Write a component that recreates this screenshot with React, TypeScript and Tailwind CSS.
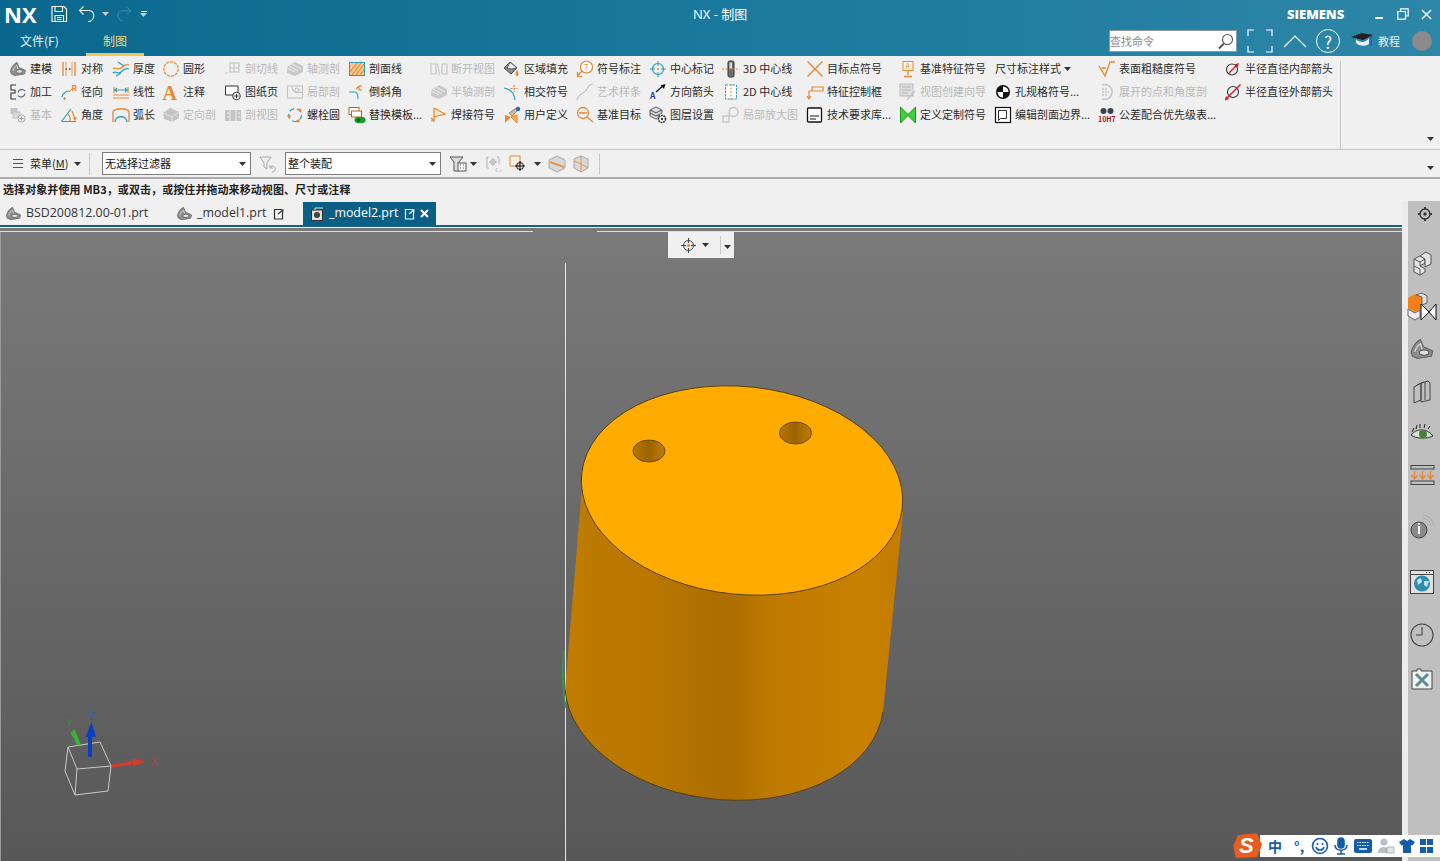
import type { ReactNode } from "react";

const O = "#e8872f";
const T = "#2a9fbd";
const D = "#333333";
const G = "#c4c4c4";

const glyphs: Record<string, ReactNode> = {
  part: (
    <>
      <path d="M1.5 11.5C2 8 5 3.5 8 2.5L10 7.5 16.5 10.5 15.5 14 6 15.5 2.5 14Z" fill="#8d8d8d" stroke="#666" strokeWidth=".8" />
      <path d="M4 11C5 8 6.500 6 8 5.500L9 9" fill="none" stroke="#d8d8d8" strokeWidth=".9" />
      <ellipse cx="10.5" cy="11.5" rx="3.2" ry="1.8" fill="#e0e0e0" stroke="#555" strokeWidth=".7" />
    </>
  ),
  jiagong: (
    <g fill="none" stroke={D} strokeWidth="1.1">
      <path d="M7 2H2V7H6V10H2V16H7" />
      <path d="M9 9.5A4 4 0 0 1 16 8M16 10.5A4 4 0 0 1 9 12.5" stroke="#555" />
    </g>
  ),
  jiben: (
    <>
      <rect x="1.5" y="2" width="7" height="6" fill={G} />
      <rect x="4" y="6" width="7" height="6" fill="#d8d8d8" stroke={G} />
      <circle cx="12.5" cy="12.5" r="3.6" fill="#eee" stroke="#aaa" />
      <path d="M12.5 10.5V14.5M10.5 12.5H14.5" stroke="#999" />
    </>
  ),
  duicheng: (
    <g fill="none" stroke={O} strokeWidth="1.3">
      <path d="M3 2V16M15 2V16" />
      <path d="M5.5 9H12.5" stroke={D} strokeDasharray="1.5 2" />
      <path d="M6 2V16" strokeWidth=".8" />
      <path d="M12 2V16" strokeWidth=".8" />
    </g>
  ),
  jingxiang: (
    <>
      <path d="M2 14A8 8 0 0 1 9 8" fill="none" stroke={T} strokeWidth="1.2" />
      <path d="M3 15.5H6M4.5 14V17M9 9L13 5" stroke={O} strokeWidth="1" />
      <text x="11.5" y="8" fontSize="8" fontWeight="700" fill={O}>R</text>
    </>
  ),
  jiaodu: (
    <>
      <path d="M1.5 15.5L11 3M1.5 15.5H16" fill="none" stroke={T} strokeWidth="1.2" />
      <path d="M8 8A8 8 0 0 1 10 15M12 5L15 13" fill="none" stroke={O} strokeWidth="1.2" />
      <path d="M13 12L17 11 15 15Z" fill={O} />
    </>
  ),
  houdu: (
    <g fill="none" strokeWidth="1.2">
      <path d="M1 9C4 6 6 11 9 8S14 4 17 5" stroke={O} />
      <path d="M1 13C4 10 6 15 9 12S14 8 17 9" stroke={T} />
      <path d="M6 2L12 6M4 16L9 13" stroke={T} />
    </g>
  ),
  xianxing: (
    <g fill="none" strokeWidth="1.2">
      <path d="M1 15H17M1 12H17" stroke={O} />
      <path d="M2 4V10M16 4V10" stroke={O} />
      <path d="M3 7H15M5 5L3 7 5 9M13 5L15 7 13 9" stroke={T} />
    </g>
  ),
  huchang: (
    <g fill="none" strokeWidth="1.3">
      <path d="M3 16C3 9 15 9 15 16" stroke={T} />
      <path d="M1 5C5 2 13 2 17 5M1 5V16M17 5V16" stroke={O} />
    </g>
  ),
  yuanxing: <circle cx="9" cy="9" r="7.2" fill="none" stroke={O} strokeWidth="1.2" strokeDasharray="3.2 .9" />,
  zhushi: <text x="0.5" y="16.500" fontFamily="Liberation Serif, serif" fontSize="20" fontWeight="700" fill={O}>A</text>,
  dingxiang: (
    <>
      <path d="M1 7L8 2 17 6V12L10 16 2 13Z" fill={G} />
      <path d="M1 7L10 11 17 6M10 11V16" fill="none" stroke="#e4e4e4" />
    </>
  ),
  qiexian: (
    <g fill="none" stroke={G} strokeWidth="1.1">
      <rect x="6" y="3" width="9" height="9" />
      <path d="M1 13H4M6 8H15M10 3V12" />
    </g>
  ),
  tuzhi: (
    <>
      <path d="M1.5 3H14V12H1.5Z" fill="#fff" stroke={D} strokeWidth="1" />
      <circle cx="12.5" cy="13" r="3.8" fill="#fff" stroke={D} />
      <path d="M12.5 10.8V15.2M10.3 13H14.7" stroke={D} />
    </>
  ),
  pouview: (
    <>
      <rect x="1" y="4" width="16" height="11" fill={G} />
      <path d="M6 4V15M12 4V15M3 7H5M3 11H5M14 7H16M14 11H16" stroke="#eee" />
    </>
  ),
  zhouce: (
    <>
      <path d="M1 7L9 2 17 6V12L9 16 1 13Z" fill="#c9c9c9" />
      <path d="M3 6L12 11M6 4L15 9M1 8L9 12" stroke="#eee" />
    </>
  ),
  jubu: (
    <g fill="none" stroke={G} strokeWidth="1.1">
      <rect x="1.5" y="3" width="15" height="12" />
      <path d="M6 3C6 9 11 11 16 9" />
      <circle cx="11" cy="7" r="2" />
    </g>
  ),
  luoshuan: (
    <>
      <circle cx="9" cy="9" r="6.5" fill="none" stroke={T} strokeWidth="1.2" strokeDasharray="5 3" />
      <circle cx="14" cy="4" r="1.6" fill={O} />
      <circle cx="3" cy="10" r="1.6" fill={O} />
      <circle cx="12" cy="15" r="1.6" fill={O} />
    </>
  ),
  poumian: (
    <>
      <rect x="1.5" y="2.5" width="15" height="13" fill="#f6c88e" stroke={T} />
      <path d="M2 12L9 3M4 15L13 3M8 15L16 4M12 15L16 10" stroke={O} strokeWidth="1.1" />
    </>
  ),
  daoxie: (
    <g fill="none" strokeWidth="1.2">
      <path d="M1 9H7C9 9 10 11 10 16" stroke={T} />
      <path d="M8 6L11 3M14 3H11V7H14" stroke={O} />
    </g>
  ),
  tihuan: (
    <>
      <rect x="1" y="1.5" width="10" height="7" fill="#fff" stroke="#b5651d" />
      <rect x="3.5" y="5" width="10" height="6" fill="#fff" stroke="#b5651d" />
      <rect x="6.5" y="11" width="11" height="6" rx="3" fill="#14a01e" />
      <circle cx="10.5" cy="14" r="1.8" fill="#063" />
    </>
  ),
  duankai: (
    <g fill="none" stroke={G} strokeWidth="1.1">
      <path d="M1 4H6C5 7 7 10 6 14H1ZM17 4H12C13 7 11 10 12 14H17Z" />
      <path d="M8 3C7 7 10 11 9 15" />
    </g>
  ),
  hanjie: (
    <g fill="none" stroke={O} strokeWidth="1.2">
      <path d="M4 2V15H1M4 2L15 8 4 11" fill="#fbe8d4" />
      <path d="M1 12L4 15" />
    </g>
  ),
  quyu: (
    <>
      <path d="M7 2L14 8 8 14 1 8Z" fill="#8f8f8f" stroke="#444" />
      <path d="M4 8L7 2 14 8 8 9Z" fill="#eee" stroke="#444" strokeWidth=".8" />
      <path d="M14 10C12 13 12 16 14 16S16 13 14 10Z" fill={O} />
    </>
  ),
  xiangjiao: (
    <g fill="none" strokeWidth="1.2">
      <path d="M1 5C7 6 11 9 12 17" stroke={T} />
      <path d="M11 2V9M7.5 5.500H14.500" stroke={O} strokeDasharray="2 1" />
    </g>
  ),
  yonghu: (
    <>
      <path d="M2 9L8 11 2 17Z" fill={O} />
      <path d="M8 11L14 9 14 17Z" fill="#f4b06a" stroke={O} />
      <path d="M6 7L13 2 15 4 9 10Z" fill="#d8b58e" stroke="#777" strokeWidth=".7" />
      <circle cx="15" cy="3" r="2.200" fill="#2b5fb8" />
    </>
  ),
  fuhao: (
    <>
      <circle cx="10.500" cy="7" r="6" fill="#fff" stroke={O} strokeWidth="1.2" />
      <text x="8" y="10" fontSize="8" fill={O}>7</text>
      <path d="M6 11L1.500 16M1.500 12V16.500H6" fill="none" stroke={O} strokeWidth="1.200" />
    </>
  ),
  yishu: <path d="M1 17C3 9 9 11 11 6S15 2 17 1" fill="none" stroke={G} strokeWidth="1.200" />,
  jizhun: (
    <g fill="none" stroke={O} strokeWidth="1.300">
      <circle cx="7" cy="7" r="5.500" />
      <path d="M3 7H11M11 11L17 16" />
    </g>
  ),
  zhongxin: (
    <>
      <circle cx="9" cy="9" r="5.500" fill="none" stroke={T} strokeWidth="1.200" />
      <path d="M9 1V6M9 12V17M1 9H6M12 9H17" stroke={T} />
      <circle cx="9" cy="9" r="1" fill={O} />
    </>
  ),
  fangxiang: (
    <>
      <text x="1" y="15.500" fontSize="8.500" fontWeight="700" fill="#1f3f9e">A</text>
      <path d="M7 9L15 2" stroke="#111" strokeWidth="1.200" />
      <path d="M16.500 1L11.500 2.500 15 6Z" fill="#111" />
    </>
  ),
  tuceng: (
    <>
      <g fill="#ddd" stroke="#555" strokeWidth=".9">
        <path d="M1 4L7 1 13 4 7 7Z" />
        <path d="M1 7L7 10 13 7V4L7 7 1 4Z" />
        <path d="M1 10L7 13 10 11.500V9L7 10 1 7Z" />
      </g>
      <circle cx="13" cy="13" r="3.500" fill="#fff" stroke="#333" strokeWidth="1.600" strokeDasharray="1.800 .7" />
      <circle cx="13" cy="13" r="1.200" fill="#333" />
    </>
  ),
  d3: (
    <>
      <rect x="6" y="1" width="6" height="16" rx="1.500" fill="#6d6d6d" stroke="#333" />
      <rect x="7.500" y="2.500" width="2.500" height="6" fill="#ddd" />
      <path d="M0 9H18" stroke={O} strokeDasharray="2 1.500" />
    </>
  ),
  d2: (
    <>
      <rect x="3.500" y="2" width="11" height="14" fill="#fff" stroke={T} strokeDasharray="2.500 1" />
      <path d="M9 1V17" stroke={O} strokeDasharray="2 1.500" />
    </>
  ),
  fangda: (
    <g fill="none" stroke={G} strokeWidth="1.300">
      <rect x="1" y="10" width="6" height="6" />
      <circle cx="11.500" cy="6" r="4.500" />
      <path d="M5 10L8 8" />
    </g>
  ),
  mubiao: <path d="M1.500 1.500L16.500 16.500M16.500 1.500L1.500 16.500" stroke={O} strokeWidth="1.400" />,
  tezheng: (
    <g fill="none" stroke={O} strokeWidth="1.200">
      <path d="M6 4H17V8H6ZM6 8H3V15M1 13L3 16 5 13" />
    </g>
  ),
  jishu: (
    <>
      <rect x="1.500" y="2" width="14" height="14" rx="1" fill="#fff" stroke="#111" strokeWidth="1.300" />
      <path d="M4 10H13M4 13H10" stroke="#111" />
    </>
  ),
  jztz: (
    <>
      <rect x="4" y="1.500" width="10" height="9" fill="#fff3e3" stroke={O} />
      <text x="6.500" y="9" fontSize="7" fill={O}>A</text>
      <path d="M9 11V15M5 16.500H13" stroke={O} strokeWidth="1.300" />
    </>
  ),
  shitu: (
    <>
      <rect x="1" y="1" width="13" height="12" fill="#dedede" stroke="#bbb" />
      <path d="M3 4H12M3 7H12M3 10H9M8 17L16 8" stroke={G} strokeWidth="1.300" />
    </>
  ),
  dingyi: <path d="M1.500 1V17L9 9.500 16.500 17V1L9 8.500Z" fill="#3fd03f" stroke="#138a13" strokeWidth=".9" />,
  kong: (
    <>
      <circle cx="9" cy="9" r="7" fill="#111" />
      <path d="M9 9V3.500A5.500 5.500 0 0 1 14.500 9ZM9 9V14.500A5.500 5.500 0 0 1 3.500 9Z" fill="#fff" />
    </>
  ),
  bianji: (
    <>
      <rect x="1.500" y="1.500" width="15" height="15" fill="#fff" stroke="#111" strokeWidth="1.200" />
      <path d="M4.500 4.500H12.500V12.500H6.500L4.500 14.500Z" fill="#fff" stroke="#333" />
    </>
  ),
  cucao: <path d="M1 6L7 16 12 2H17M3.500 8H8" fill="none" stroke={O} strokeWidth="1.300" />,
  zhankai: (
    <g fill="none" stroke={G} strokeWidth="1.500">
      <path d="M4 2C9 0 15 4 14 10S8 17 4 16" />
      <path d="M4 6H9M4 9H11M4 12H9" strokeDasharray="2 1" />
    </g>
  ),
  gongcha: (
    <>
      <circle cx="5.500" cy="5" r="3" fill="#39424f" />
      <circle cx="12.500" cy="5" r="3" fill="#39424f" />
      <text x="0" y="15.500" fontSize="7" fontWeight="700" fill="#a0181c">10H7</text>
    </>
  ),
  ban1: (
    <>
      <circle cx="8" cy="9.500" r="5.500" fill="none" stroke="#333" strokeWidth="1.100" />
      <path d="M5 13L13 5" stroke="#d0212a" strokeWidth="1.400" />
      <path d="M15 3L10.500 4.500 13.500 7.500Z" fill="#d0212a" />
    </>
  ),
  ban2: (
    <>
      <circle cx="9" cy="9" r="5.500" fill="none" stroke="#333" strokeWidth="1.100" />
      <path d="M1.500 16.500L16.500 1.500" stroke="#d0212a" strokeWidth="1.400" />
      <path d="M2 13L5 16 1 17.500Z" fill="#d0212a" />
    </>
  ),
};

function Glyph({ name, size = 18 }: { name: string; size?: number }) {
  return (
    <svg width={size} height={size} viewBox="0 0 18 18" className="shrink-0 overflow-visible">
      {glyphs[name]}
    </svg>
  );
}

function Caret({ className = "" }: { className?: string }) {
  return (
    <svg width="7" height="4" viewBox="0 0 7 4" className={className}>
      <path d="M0 0H7L3.500 4Z" fill="#333" />
    </svg>
  );
}

type Item = { icon?: string; label?: string; off?: boolean; caret?: boolean };
type Column = { w: string; items: Item[] };

const columns: Column[] = [
  { w: "w-[51px]", items: [{ icon: "part", label: "建模" }, { icon: "jiagong", label: "加工" }, { icon: "jiben", label: "基本", off: true }] },
  { w: "w-[52px]", items: [{ icon: "duicheng", label: "对称" }, { icon: "jingxiang", label: "径向" }, { icon: "jiaodu", label: "角度" }] },
  { w: "w-[50px]", items: [{ icon: "houdu", label: "厚度" }, { icon: "xianxing", label: "线性" }, { icon: "huchang", label: "弧长" }] },
  { w: "w-[62px]", items: [{ icon: "yuanxing", label: "圆形" }, { icon: "zhushi", label: "注释" }, { icon: "dingxiang", label: "定向剖", off: true }] },
  { w: "w-[62px]", items: [{ icon: "qiexian", label: "剖切线", off: true }, { icon: "tuzhi", label: "图纸页" }, { icon: "pouview", label: "剖视图", off: true }] },
  { w: "w-[62px]", items: [{ icon: "zhouce", label: "轴测剖", off: true }, { icon: "jubu", label: "局部剖", off: true }, { icon: "luoshuan", label: "螺栓圆" }] },
  { w: "w-[82px]", items: [{ icon: "poumian", label: "剖面线" }, { icon: "daoxie", label: "倒斜角" }, { icon: "tihuan", label: "替换模板..." }] },
  { w: "w-[73px]", items: [{ icon: "duankai", label: "断开视图", off: true }, { icon: "zhouce", label: "半轴测剖", off: true }, { icon: "hanjie", label: "焊接符号" }] },
  { w: "w-[73px]", items: [{ icon: "quyu", label: "区域填充" }, { icon: "xiangjiao", label: "相交符号" }, { icon: "yonghu", label: "用户定义" }] },
  { w: "w-[73px]", items: [{ icon: "fuhao", label: "符号标注" }, { icon: "yishu", label: "艺术样条", off: true }, { icon: "jizhun", label: "基准目标" }] },
  { w: "w-[73px]", items: [{ icon: "zhongxin", label: "中心标记" }, { icon: "fangxiang", label: "方向箭头" }, { icon: "tuceng", label: "图层设置" }] },
  { w: "w-[84px]", items: [{ icon: "d3", label: "3D 中心线" }, { icon: "d2", label: "2D 中心线" }, { icon: "fangda", label: "局部放大图", off: true }] },
  { w: "w-[93px]", items: [{ icon: "mubiao", label: "目标点符号" }, { icon: "tezheng", label: "特征控制框" }, { icon: "jishu", label: "技术要求库..." }] },
  { w: "w-[95px]", items: [{ icon: "jztz", label: "基准特征符号" }, { icon: "shitu", label: "视图创建向导", off: true }, { icon: "dingyi", label: "定义定制符号" }] },
  { w: "w-[104px]", items: [{ label: "尺寸标注样式", caret: true }, { icon: "kong", label: "孔规格符号..." }, { icon: "bianji", label: "编辑剖面边界..." }] },
  { w: "w-[126px]", items: [{ icon: "cucao", label: "表面粗糙度符号" }, { icon: "zhankai", label: "展开的点和角度剖", off: true }, { icon: "gongcha", label: "公差配合优先级表..." }] },
  { w: "w-[116px]", items: [{ icon: "ban1", label: "半径直径内部箭头" }, { icon: "ban2", label: "半径直径外部箭头" }, {}] },
];

function RibbonItem({ item }: { item: Item }) {
  return (
    <div className="flex h-[23px] items-center">
      {item.icon && (
        <span className="flex w-[21px] shrink-0">
          <Glyph name={item.icon} />
        </span>
      )}
      {item.label && (
        <span className={`whitespace-nowrap text-[11px] ${item.icon ? "" : "ml-[1px]"} ${item.off ? "text-[#b9b9b9]" : "text-[#2b2b2b]"}`}>
          {item.label}
        </span>
      )}
      {item.caret && <Caret className="ml-[3px]" />}
    </div>
  );
}

function TitleBar() {
  return (
    <header className="flex h-[56px] flex-col bg-gradient-to-r from-[#0a688e] via-[#1a799d] to-[#2c86a7] text-white">
      <div className="flex h-[28px] items-center">
        <span className="ml-[4px] w-[38px] font-['Open_Sans',sans-serif] text-[22px] leading-[28px] font-bold">NX</span>
        <svg width="18" height="18" viewBox="0 0 18 18" className="ml-[8px]" fill="none" stroke="#fff" strokeWidth="1.100">
          <path d="M2 1.500H14L16.500 4V16.500H2Z" />
          <path d="M5 1.500V6.500H12.500V1.500M5 16.500V10.500H13.500V16.500M7 12.500H11.500M7 14.500H11.500" />
        </svg>
        <svg width="18" height="18" viewBox="0 0 18 18" className="ml-[10px]" fill="none" stroke="#fff" strokeWidth="1.100">
          <path d="M5.500 1.500L1.500 5.500 5.500 9.500M1.500 5.500H11C18 5.500 17 16.500 10 16.500" />
        </svg>
        <Caret className="ml-[6px] invert" />
        <svg width="16" height="16" viewBox="0 0 18 18" className="ml-[7px]" fill="none" stroke="#3e8fb0" strokeWidth="1.100">
          <path d="M12.500 1.500L16.500 5.500 12.500 9.500M16.500 5.500H7C0 5.500 1 16.500 8 16.500" />
        </svg>
        <span className="ml-[8px] flex flex-col items-center gap-[1px]">
          <span className="h-px w-[6px] bg-white" />
          <Caret className="invert" />
        </span>
        <span className="ml-[546px] w-[594px] font-['Open_Sans','Noto_Sans_CJK_SC',sans-serif] text-[13px] leading-[20px]">NX - 制图</span>
        <span className="w-[61px] font-['Open_Sans',sans-serif] text-[13px] leading-[20px] font-extrabold">SIEMENS</span>
        <span className="ml-[27px] mt-[7px] h-[2px] w-[8px] bg-white" />
        <svg width="12" height="12" viewBox="0 0 12 12" className="ml-[14px]" fill="none" stroke="#fff" strokeWidth="1.200">
          <path d="M3.500 3V.8H11.200V8H8.500M.8 3.500H8.500V11.200H.8Z" />
        </svg>
        <svg width="11" height="11" viewBox="0 0 12 12" className="ml-[12px]" fill="none" stroke="#fff" strokeWidth="1.500">
          <path d="M1 1L11 11M11 1L1 11" />
        </svg>
      </div>
      <div className="flex h-[28px] items-stretch">
        <span className="ml-[20px] w-[66px] pt-[3px] text-[12px] leading-[20px] text-[#e8f2f6]">文件(F)</span>
        <span className="flex w-[58px] items-start justify-center border-b-[3px] border-[#efc75e] pt-[3px] text-[12px] leading-[20px] text-[#f2d477]">制图</span>
        <div className="ml-[965px] flex h-[26px] items-center">
          <div className="flex h-[22px] w-[128px] items-center justify-between border border-[#8a9aa3] bg-white pr-[2px]">
            <span className="text-[11px] text-[#8b8b8b]">查找命令</span>
            <svg width="17" height="17" viewBox="0 0 17 17" fill="none" stroke="#555" strokeWidth="1.100">
              <circle cx="10.500" cy="6.500" r="5" />
              <path d="M7 10.500L2 15.500" strokeWidth="2" />
            </svg>
          </div>
          <svg width="26" height="24" viewBox="0 0 26 24" className="ml-[10px]" fill="none" stroke="#fff" strokeWidth="1.200">
            <path d="M1 7V1H7M19 1H25V7M25 17V23H19M7 23H1V17" />
          </svg>
          <svg width="24" height="13" viewBox="0 0 24 13" className="ml-[10px]" fill="none" stroke="#fff" strokeWidth="1.200">
            <path d="M1 12L12 1 23 12" />
          </svg>
          <span className="ml-[9px] flex h-[24px] w-[24px] items-center justify-center rounded-full border border-white text-[17px] leading-none">?</span>
          <svg width="24" height="18" viewBox="0 0 24 18" className="ml-[10px]">
            <path d="M1 5L12 1 23 3 13 8Z" fill="#222" />
            <path d="M6 7C9 11 16 11 19 6V12C15 15 9 14 6 11Z" fill="#e9eef2" />
            <path d="M21 4V14" stroke="#2257c9" strokeWidth="1.500" />
          </svg>
          <span className="ml-[4px] text-[11px] text-[#e6f0f4]">教程</span>
          <span className="ml-[12px] h-[20px] w-[20px] rounded-full bg-[#8b8b8b]" />
        </div>
      </div>
    </header>
  );
}

function Ribbon() {
  return (
    <section className="relative flex h-[94px] border-b border-[#c4c4c4] bg-[#f0f0f0] pl-[9px] pt-[1px]">
      {columns.map((col, i) => (
        <div key={i} className={`${col.w} shrink-0`}>
          {col.items.map((item, k) => (
            <RibbonItem key={k} item={item} />
          ))}
        </div>
      ))}
      <span className="mt-[4px] h-[88px] w-px bg-[#c6c6c6]" />
      <Caret className="absolute right-[6px] bottom-[8px]" />
    </section>
  );
}

function FilterSelect({ w, label }: { w: string; label: string }) {
  return (
    <div className={`${w} flex h-[23px] items-center justify-between border border-[#7d7d7d] bg-white pr-[4px] pl-[2px]`}>
      <span className="text-[11px] text-[#111]">{label}</span>
      <Caret />
    </div>
  );
}

function Toolbar() {
  return (
    <section className="relative flex h-[29px] items-center border-b-[2px] border-[#acacac] bg-[#f0f0f0]">
      <svg width="10" height="9" viewBox="0 0 10 9" className="ml-[13px]" stroke="#555">
        <path d="M0 .500H10M0 4.500H10M0 8.500H10" />
      </svg>
      <span className="ml-[7px] w-[40px] text-[11px] text-[#222]">菜单(<u>M</u>)</span>
      <Caret className="ml-[4px]" />
      <span className="ml-[8px] h-[22px] w-px bg-[#c8c8c8]" />
      <span className="ml-[12px]">
        <FilterSelect w="w-[149px]" label="无选择过滤器" />
      </span>
      <svg width="18" height="18" viewBox="0 0 18 18" className="ml-[8px]" fill="none" stroke="#a8a8a8">
        <path d="M1 2H12L8 8V14L5 12V8Z" />
        <path d="M11 12A3 3 0 1 1 13 17M11 10V13H14" />
      </svg>
      <span className="ml-[8px]">
        <FilterSelect w="w-[156px]" label="整个装配" />
      </span>
      <span className="ml-[8px] flex">
        <svg width="18" height="18" viewBox="0 0 18 18" fill="none" stroke="#555">
          <path d="M1 2H14L10 7V16H5V7Z" fill="#ddd" />
          <rect x="9" y="8" width="8" height="8" fill="#fff" />
          <path d="M11 10H12M14 10H15M11 13H12M14 13H15" />
        </svg>
      </span>
      <Caret className="ml-[3px]" />
      <svg width="17" height="17" viewBox="0 0 17 17" className="ml-[9px]" fill="none" stroke="#b4b4b4">
        <path d="M3 2H1V13H3M11 2H13V9" />
        <circle cx="7" cy="7" r="2.500" />
        <path d="M7 3V11M3 7H11M11 13A2.500 2.500 0 1 0 15 15" />
      </svg>
      <svg width="18" height="18" viewBox="0 0 18 18" className="ml-[6px]" fill="none">
        <rect x="1" y="1" width="10" height="10" stroke={O} fill="#fdf3e8" />
        <circle cx="11" cy="11" r="3.500" stroke="#111" />
        <path d="M11 6V16M6 11H16" stroke="#111" />
      </svg>
      <Caret className="ml-[7px]" />
      <svg width="18" height="18" viewBox="0 0 18 18" className="ml-[7px]">
        <path d="M9 1L17 5V13L9 17 1 13V5Z" fill="#d8d8d8" stroke="#aaa" />
        <path d="M2 7L16 12" stroke={O} strokeWidth="1.400" />
      </svg>
      <svg width="16" height="18" viewBox="0 0 16 18" className="ml-[7px]" fill="#d8d8d8">
        <path d="M8 1L15 4V13L8 17 1 13V4Z" stroke="#aaa" />
        <path d="M8 1V9L15 13M1 6L8 9V17" fill="none" stroke={O} strokeWidth=".8" />
      </svg>
      <span className="ml-[10px] h-[20px] w-px bg-[#c8c8c8]" />
      <Caret className="absolute right-[6px] bottom-[7px]" />
    </section>
  );
}

function TabIcon({ tone }: { tone: string }) {
  return (
    <svg width="11" height="12" viewBox="0 0 11 12" fill="none" stroke={tone} strokeWidth="1.200">
      <path d="M8 1.500H1.500V11H9.500V5" />
      <path d="M5 6L10 2M7 1.500L10 2 9.500 5" />
    </svg>
  );
}

function Tabs() {
  const tabText = "font-['Open_Sans',sans-serif] text-[12.400px]";
  return (
    <div className="flex h-[24px] shrink-0 items-stretch border-t border-[#f0f0f0] bg-[#f0f0f0]">
      <div className="ml-[5px] flex w-[171px] items-center gap-[4px]">
        <Glyph name="part" size={17} />
        <span className={`${tabText} text-[#333]`}>BSD200812.00-01.prt</span>
      </div>
      <div className="flex w-[127px] items-center gap-[4px]">
        <Glyph name="part" size={17} />
        <span className={`${tabText} text-[#333]`}>_model1.prt</span>
        <span className="ml-[3px] flex">
          <TabIcon tone="#333" />
        </span>
      </div>
      <div className="flex w-[133px] items-center bg-[#0b5f85] pl-[8px] text-white">
        <svg width="13" height="14" viewBox="0 0 13 14">
          <rect x=".5" y="3" width="11" height="10.500" fill="#ddd" stroke="#333" />
          <circle cx="6" cy="8" r="3" fill="#444" />
          <path d="M4 3V1H12" stroke="#ddd" fill="none" />
        </svg>
        <span className={`${tabText} ml-[5px]`}>_model2.prt</span>
        <span className="ml-[6px] flex">
          <TabIcon tone="#fff" />
        </span>
        <svg width="9" height="9" viewBox="0 0 9 9" className="ml-[5px]" stroke="#fff" strokeWidth="2">
          <path d="M1 1L8 8M8 1L1 8" />
        </svg>
      </div>
    </div>
  );
}

function Scene() {
  return (
    <svg viewBox="0 228 1402 633" width="1402" height="633" className="absolute inset-0">
      <defs>
        <linearGradient id="body" gradientUnits="userSpaceOnUse" x1="565" x2="903" y1="0" y2="0">
          <stop offset="0" stopColor="#c17d00" />
          <stop offset=".1" stopColor="#bb7900" />
          <stop offset=".22" stopColor="#ba7800" />
          <stop offset=".36" stopColor="#b37300" />
          <stop offset=".47" stopColor="#ad6d00" />
          <stop offset=".53" stopColor="#b27200" />
          <stop offset=".6" stopColor="#be7a00" />
          <stop offset=".75" stopColor="#c37e00" />
          <stop offset=".88" stopColor="#c88000" />
          <stop offset="1" stopColor="#c27c00" />
        </linearGradient>
        <linearGradient id="hole">
          <stop offset="0" stopColor="#b97500" />
          <stop offset=".5" stopColor="#9c6400" />
          <stop offset="1" stopColor="#c27d00" />
        </linearGradient>
      </defs>
      <path d="M.5 231V861" stroke="#9a9a9a" />
      <path d="M0 231.500H533M597 231.500H1402" stroke="#dcdcdc" />
      <path d="M565.500 263V861" stroke="#e6e6e6" />
      <path d="M564 650C562 670 562 690 566 708" fill="none" stroke="#2f9d55" strokeWidth="1.600" />
      <path d="M582 487L565 690A160 107 6 0 0 883 712L903 512Z" fill="url(#body)" />
      <path d="M565 690A160 107 6 0 0 883 712" fill="none" stroke="#4f3a10" strokeWidth=".9" />
      <ellipse cx="742" cy="490.500" rx="161.200" ry="103.900" transform="rotate(6 742 490.500)" fill="#ffab00" stroke="#4f3a10" strokeWidth=".9" />
      <ellipse cx="649" cy="451" rx="16" ry="11" fill="url(#hole)" stroke="#4f3a10" strokeWidth=".8" />
      <ellipse cx="795.500" cy="433" rx="16" ry="11" fill="url(#hole)" stroke="#4f3a10" strokeWidth=".8" />
      <g fill="none" stroke="#c9c9c9" strokeWidth="1">
        <path d="M68 747L100 742 111 766 77 769ZM68 747L65 771 75 795 108 791 111 766M77 769L75 795" />
      </g>
      <path d="M79 745L73 731 76 738" stroke="#35b82f" strokeWidth="4" fill="none" />
      <path d="M70.500 734L74 729 80 744Z" fill="#35b82f" />
      <path d="M90 757V735" stroke="#0a3fc0" strokeWidth="4" />
      <path d="M85.500 737L91.500 722 96 737Z" fill="#0a3fc0" />
      <path d="M112 766L132 763" stroke="#d63a2c" strokeWidth="3" />
      <path d="M132 759L146 761 133 767Z" fill="#d63a2c" />
      <g fontFamily="Liberation Sans, sans-serif" fontSize="10">
        <text x="151" y="765" fill="#a8483f">X</text>
        <text x="66" y="727" fill="#3d8a3c">Y</text>
        <text x="89" y="720" fill="#2a5dc5">Z</text>
      </g>
    </svg>
  );
}

function ViewFloat() {
  return (
    <div className="absolute top-[4px] left-[668px] flex h-[26px] w-[66px] items-center bg-[#f0f0f0] pl-[13px]">
      <svg width="15" height="15" viewBox="0 0 15 15" fill="none" stroke="#444">
        <circle cx="7.500" cy="7.500" r="5" />
        <path d="M7.500 0V5M7.500 10V15M0 7.500H5M10 7.500H15" />
        <circle cx="7.500" cy="7.500" r="1.500" fill={O} stroke="none" />
      </svg>
      <Caret className="ml-[6px] mb-[1px]" />
      <span className="ml-[11px] h-[18px] w-px bg-[#c8c8c8]" />
      <Caret className="ml-[3px] mt-[3px]" />
    </div>
  );
}

function Rail() {
  return (
    <aside className="flex w-[32px] flex-col items-center bg-[#bfbfbf] pt-[4px] pr-[4px]">
      <svg width="16" height="16" viewBox="0 0 16 16" fill="none" stroke="#333" className="mt-[1px] ml-[6px]" strokeWidth="1.400">
        <circle cx="8" cy="8" r="5" />
        <circle cx="8" cy="8" r="1" fill="#333" />
        <path d="M8 1V3M8 13V15M1 8H3M13 8H15" strokeWidth="2" />
      </svg>
      <svg width="24" height="26" viewBox="0 0 24 26" className="mt-[28px]" fill="#e4e4e4" stroke="#555">
        <path d="M4 9L10 6 15 9V13L10 16 15 19V22L10 25 4 22Z" />
        <path d="M10 6L16 2 21 5V14L15 17V9Z" />
        <path d="M4 9L10 12 15 9M10 12V16M4 16L10 19V25" fill="none" />
      </svg>
      <svg width="30" height="32" viewBox="0 0 30 32" className="mt-[16px]">
        <path d="M1 6L8 2 15 5V16L8 20 1 16Z" fill="#f47f17" />
        <path d="M9 3L15 1 20 4V11L15 13V5Z" fill="#ddd" stroke="#666" />
        <path d="M1 17L8 21 13 18V25L8 28 1 24Z" fill="#eee" stroke="#666" />
        <path d="M14 12L22 20 29 12V28L22 20 14 28Z" fill="#fff" stroke="#111" />
      </svg>
      <span className="mt-[12px] flex">
        <Glyph name="part" size={26} />
      </span>
      <svg width="20" height="24" viewBox="0 0 20 24" className="mt-[18px]" fill="none" stroke="#444">
        <path d="M2 7L9 3V20L2 23ZM9 3L16 1 18 3V20L9 22V3M5 5L12 2M13 2V20" />
      </svg>
      <svg width="24" height="16" viewBox="0 0 24 16" className="mt-[19px]">
        <path d="M1 12C6 5 17 5 23 13 17 16 6 16 1 12Z" fill="#d7ddd0" stroke="#333" />
        <circle cx="13" cy="11" r="4" fill="#46813a" />
        <path d="M2 9L4 5M6 6L7 2M10 5V1M14 5L15 1M18 6L20 3" stroke="#222" />
      </svg>
      <svg width="25" height="20" viewBox="0 0 25 20" className="mt-[26px]" fill="none">
        <rect x="1" y=".5" width="23" height="3.500" stroke="#444" />
        <rect x="1" y="16" width="23" height="3.500" stroke="#444" />
        <path d="M4.500 6V13M12.500 6V13M20.500 6V13M1.500 10L4.500 14 7.500 10M9.500 10L12.500 14 15.500 10M17.500 10L20.500 14 23.500 10" stroke={O} strokeWidth="1.300" />
      </svg>
      <svg width="26" height="26" viewBox="0 0 26 26" className="mt-[30px]">
        <circle cx="10" cy="15" r="8" fill="#8a8a8a" stroke="#444" />
        <path d="M10 11V19" stroke="#fff" strokeWidth="2" />
        <circle cx="10" cy="8.800" r="1" fill="#fff" />
        <path d="M14 3A10 10 0 0 1 22 11M14 0A14 14 0 0 1 25 11" stroke="#aaa" fill="none" />
      </svg>
      <svg width="24" height="24" viewBox="0 0 24 24" className="mt-[29px]">
        <rect x=".5" y=".5" width="23" height="23" fill="#e2e2e2" stroke="#444" />
        <path d="M1 4.500H23M16 2.500H17M19 2.500H20" stroke="#444" />
        <circle cx="12" cy="13.500" r="8" fill="#2d8cb0" />
        <path d="M7 10L11 8 12 12 8 15ZM14 11H19L17 17 14 15Z" fill="#bfe3ef" />
      </svg>
      <svg width="24" height="24" viewBox="0 0 24 24" className="mt-[29px]" fill="none" stroke="#444" strokeWidth="1.100">
        <circle cx="12" cy="12" r="11" />
        <path d="M12 4V12H6" />
      </svg>
      <svg width="22" height="22" viewBox="0 0 22 22" className="mt-[21px]">
        <path d="M1 3H6V1H10V3H21V21H1Z" fill="#f2f2f2" stroke="#444" />
        <path d="M5 6L17 18M17 6L5 18" stroke="#5a8f8f" strokeWidth="3" />
      </svg>
    </aside>
  );
}

function ImeBar() {
  return (
    <div className="absolute right-0 bottom-[4px] flex h-[22px] w-[180px] items-center bg-white pl-[8px] font-['Noto_Sans_CJK_SC',sans-serif] text-[#135da8]">
      <svg width="29" height="25" viewBox="0 0 29 25" className="absolute -top-[2px] -left-[27px] overflow-visible">
        <path d="M5 2L24 0 29 12 24 24 3 25 0 13Z" fill="#e85c23" />
        <text x="6" y="20" fontFamily="Liberation Sans, sans-serif" fontSize="22" fontWeight="700" fontStyle="italic" fill="#fff">S</text>
      </svg>
      <span className="w-[22px] text-[14px] leading-none font-bold">中</span>
      <span className="w-[21px] pl-[4px] text-[14px] leading-none font-bold">°,</span>
      <svg width="18" height="18" viewBox="0 0 18 18" fill="none" stroke="#135da8" strokeWidth="1.600">
        <circle cx="9" cy="9" r="7.500" />
        <path d="M5 10C6 14 12 14 13 10M6.500 6V8M11.500 6V8" />
      </svg>
      <svg width="14" height="18" viewBox="0 0 14 18" className="ml-[5px]" fill="none" stroke="#135da8" strokeWidth="1.600">
        <rect x="4" y="1" width="6" height="10" rx="3" fill="#135da8" />
        <path d="M1 8C1 15 13 15 13 8M7 13V17M3 17H11" />
      </svg>
      <svg width="18" height="14" viewBox="0 0 18 14" className="ml-[6px]" fill="#135da8">
        <rect width="18" height="14" rx="2" />
        <path d="M3 3.500H15M3 6.500H15" stroke="#fff" strokeDasharray="1.500 1" />
        <path d="M5 10H13" stroke="#fff" strokeWidth="1.500" />
      </svg>
      <svg width="18" height="18" viewBox="0 0 18 18" className="ml-[5px]" fill="#b9bfc6">
        <circle cx="7" cy="5" r="3.500" />
        <path d="M1 16C1 8 12 8 12 16Z" />
        <rect x="10" y="10" width="7" height="6" fill="#e3e6e9" stroke="#8a9099" strokeWidth=".6" />
      </svg>
      <svg width="16" height="16" viewBox="0 0 16 16" className="ml-[4px]" fill="#135da8">
        <path d="M5 1L8 3 11 1 16 4 13.500 7.500 12 7V15H4V7L2.500 7.500 0 4Z" />
      </svg>
      <span className="ml-[5px] grid w-[13px] grid-cols-2 gap-[1.500px]">
        <span className="h-[6px] bg-[#135da8]" />
        <span className="h-[6px] bg-[#135da8]" />
        <span className="h-[6px] bg-[#135da8]" />
        <span className="h-[6px] bg-[#135da8]" />
      </span>
    </div>
  );
}

export default function App() {
  return (
    <div className="relative flex h-[861px] w-[1440px] flex-col overflow-hidden bg-[#f0f0f0] font-['Noto_Sans_CJK_SC',sans-serif]">
      <TitleBar />
      <Ribbon />
      <Toolbar />
      <div className="flex h-[22px] shrink-0 items-center pb-[2px] pl-[3px] text-[11px] font-bold tracking-[0.08px] text-[#222]">
        选择对象并使用 MB3，或双击，或按住并拖动来移动视图、尺寸或注释
      </div>
      <div className="flex min-h-0 flex-1">
        <div className="flex w-[1402px] flex-col">
          <Tabs />
          <div className="h-[2px] shrink-0 bg-[#1b5f82]" />
          <div className="h-px shrink-0 bg-[#f0f0f0]" />
          <main className="relative flex-1 overflow-hidden bg-gradient-to-b from-[#7a7a7a] to-[#585858]">
            <Scene />
            <ViewFloat />
          </main>
        </div>
        <div className="w-[6px] bg-[#ececec]" />
        <Rail />
      </div>
      <ImeBar />
    </div>
  );
}
